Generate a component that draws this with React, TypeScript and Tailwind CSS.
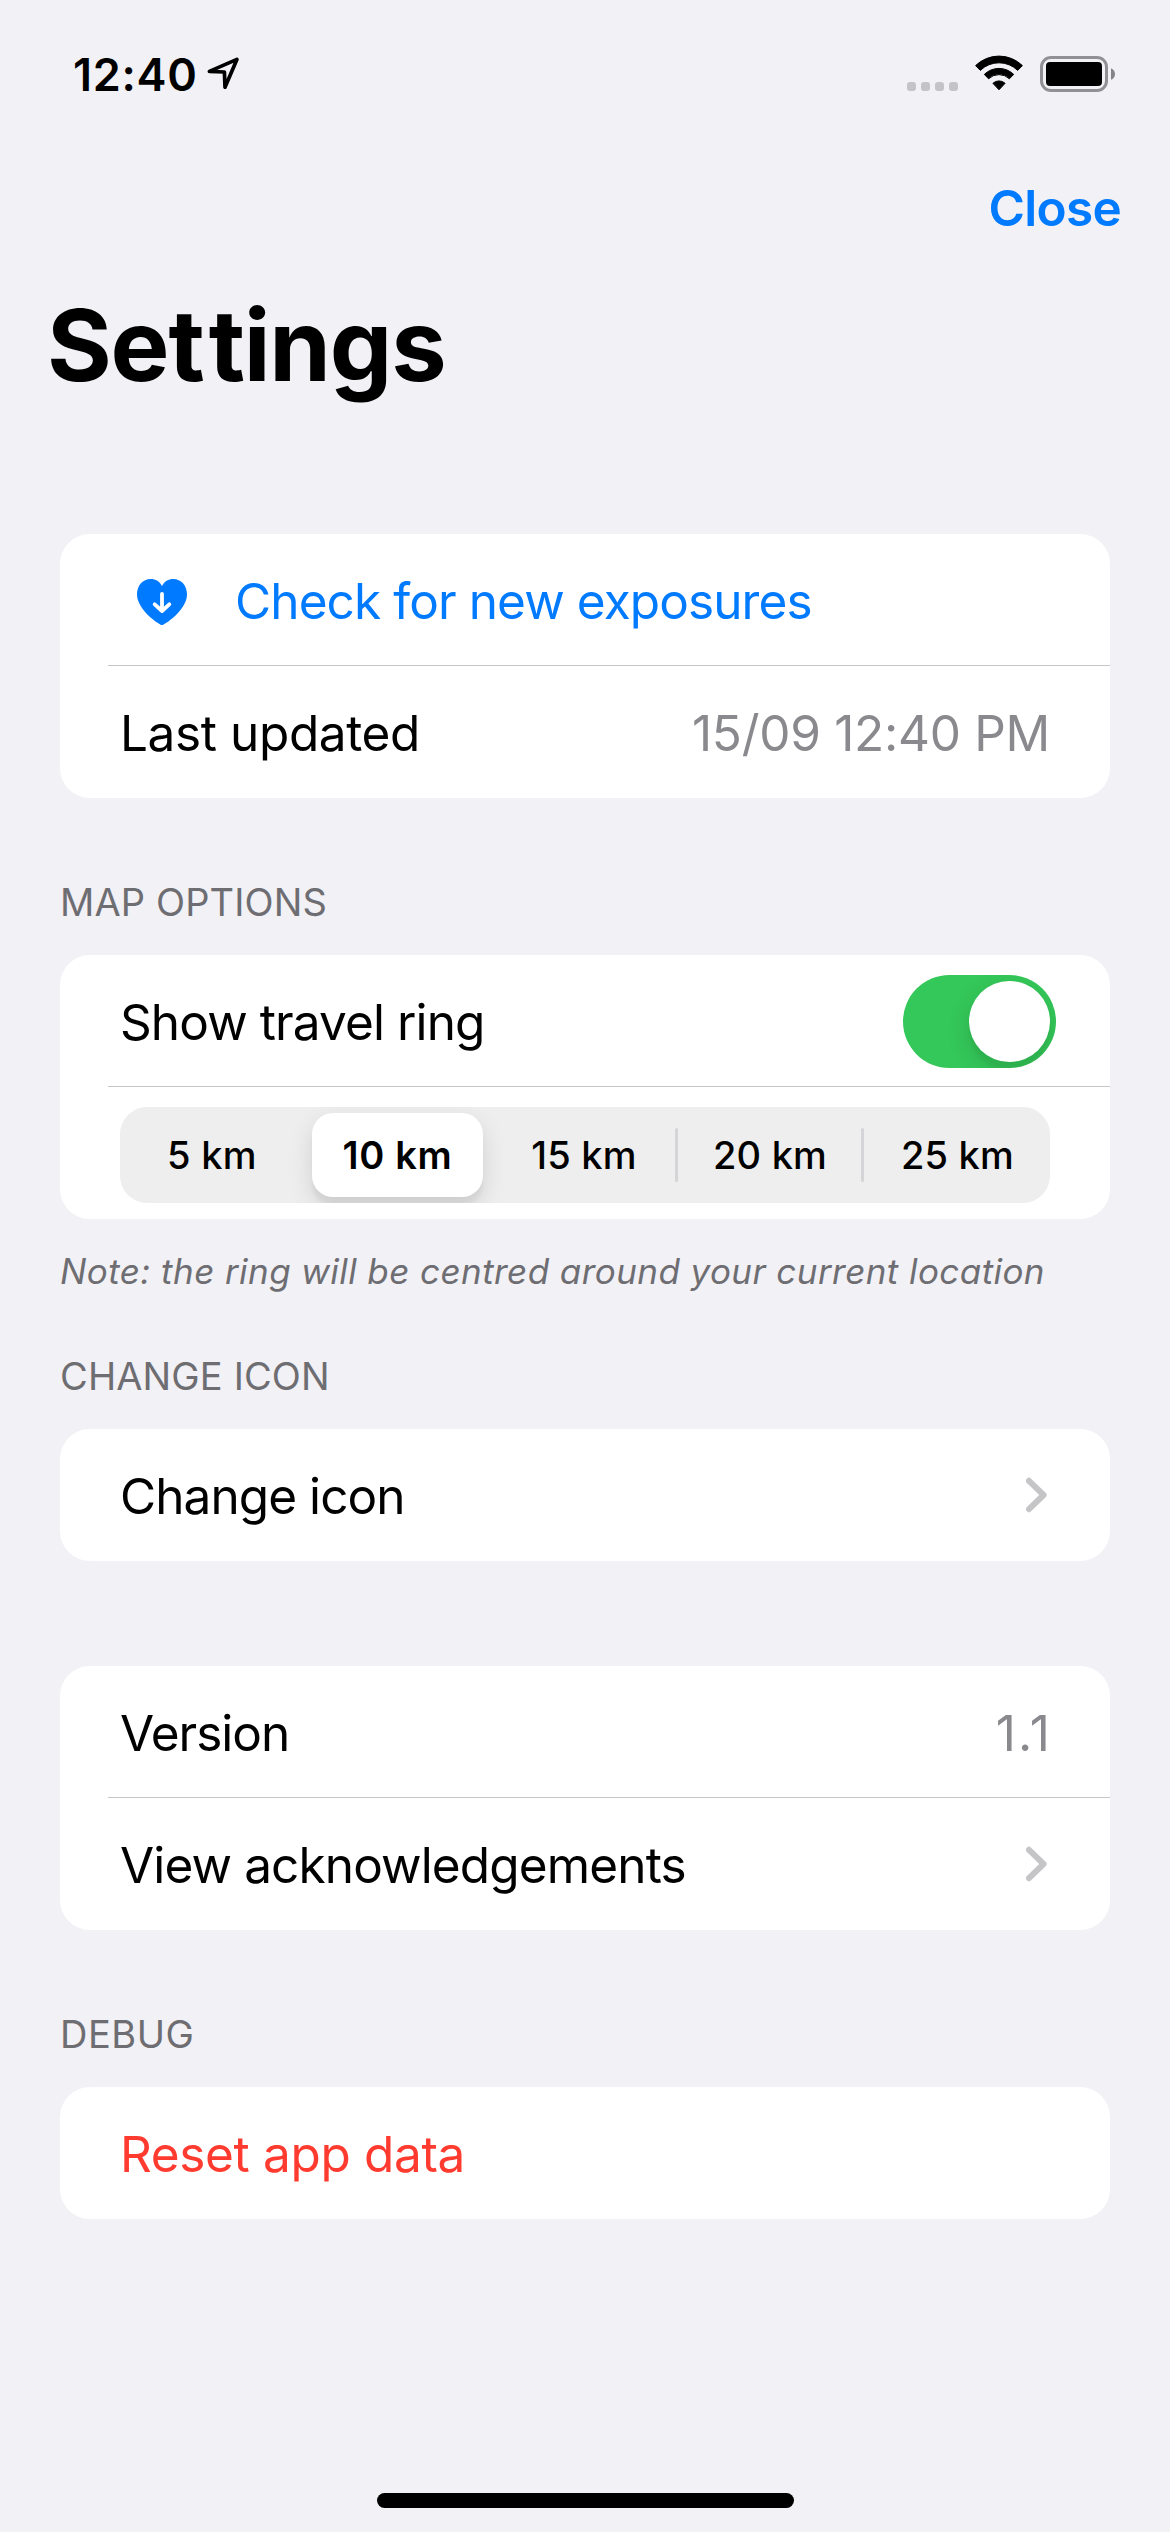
import type { ReactNode } from "react";

function LocationArrow() {
  return (
    <svg width="33" height="33" viewBox="0 0 33 33" fill="none" stroke="#000" strokeWidth="3.7" strokeLinejoin="round">
      <path d="M2.4 14.4 29.9 2.4 18 30.2 17.4 15Z" />
    </svg>
  );
}

function SignalDots() {
  return (
    <div className="mt-[34px] flex gap-[5px]">
      {[0, 1, 2, 3].map((i) => (
        <span key={i} className="size-[9px] rounded-[3px] bg-[#c4c3c8]" />
      ))}
    </div>
  );
}

function Wifi() {
  return (
    <svg className="ml-[17px] mt-[7px]" width="48" height="36" viewBox="0 0 48 36" stroke="#000" strokeWidth="1" strokeLinejoin="round">
      <path d="M.6 10.6A33.5 33.5 0 0 1 47.4 10.6L42.7 15.4A26.8 26.8 0 0 0 5.3 15.4Z" />
      <path d="M9.3 19.4A21 21 0 0 1 38.7 19.4L34.4 23.8A15 15 0 0 0 13.6 23.8Z" />
      <path d="M17.9 28.3A9 9 0 0 1 30.1 28.3L24 34.8Z" />
    </svg>
  );
}

function Battery() {
  return (
    <svg className="ml-[17px] mt-[8px]" width="75" height="36" viewBox="0 0 75 36">
      <rect x="1.5" y="1.5" width="65" height="33" rx="9.5" fill="none" stroke="#919095" strokeWidth="3" />
      <rect x="6" y="6" width="56" height="24" rx="4" fill="#000" />
      <path d="M71 12.2c2.4.9 4 3.1 4 5.8s-1.6 4.9-4 5.8Z" fill="#84838a" />
    </svg>
  );
}

function HeartDown() {
  return (
    <svg className="ml-[17px] mr-[48px] mt-[2px]" width="50" height="46" viewBox="0 0 50 46">
      <path
        fill="#007aff"
        d="M25 46C22.8 46 0 31 0 15.4C0 6.4 6 0 13.7 0 18.6 0 22.8 2.6 25 7 27.2 2.6 31.4 0 36.3 0 44 0 50 6.4 50 15.4C50 31 27.2 46 25 46Z"
      />
      <path d="M25 14.8V31.6M17.7 25.3 25 32 32.3 25.3" fill="none" stroke="#fff" strokeWidth="3.8" strokeLinecap="round" strokeLinejoin="round" />
    </svg>
  );
}

function Chevron() {
  return (
    <svg className="mr-[3px] mb-[2px]" width="21" height="36" viewBox="0 0 21 36" fill="none" stroke="#c5c5c7" strokeWidth="6" strokeLinecap="round" strokeLinejoin="round">
      <path d="M3 3.8 17.6 18 3 32.2" />
    </svg>
  );
}

function Card({ children, className = "" }: { children: ReactNode; className?: string }) {
  return <div className={`overflow-hidden rounded-[30px] bg-white ${className}`}>{children}</div>;
}

function Row({ children, className = "" }: { children: ReactNode; className?: string }) {
  return (
    <div className={`flex h-[132px] items-center justify-between px-[60px] pt-[2px] text-[49.5px] leading-[60px] ${className}`}>
      {children}
    </div>
  );
}

function Divider() {
  return <div className="-mt-px ml-12 h-px bg-[#c6c6c8]" />;
}

function SectionTitle({ children, className = "" }: { children: ReactNode; className?: string }) {
  return <h2 className={`mb-[30px] text-[38px] leading-[46px] text-[#6d6d72] ${className}`}>{children}</h2>;
}

const distances = [
  { label: "5 km", spacing: "mr-[2px] tracking-[0.3px]" },
  { label: "10 km", selected: true, spacing: "tracking-[0.7px]" },
  { label: "15 km", spacing: "mr-[2px] tracking-[0.2px]" },
  { label: "20 km", separated: true, spacing: "mr-[2px] tracking-[0.2px]" },
  { label: "25 km", separated: true, spacing: "ml-[1px] tracking-[0.2px]" },
];

function DistancePicker() {
  return (
    <div className="mx-[60px] mt-[20px] mb-[16px] grid h-[96px] grid-cols-5 overflow-hidden rounded-[27px] bg-[#eeeeee] text-[38px] font-medium leading-[46px]">
      {distances.map((d) => (
        <div key={d.label} className="relative flex items-center justify-center">
          {d.separated && <span className="absolute top-[21px] -left-[3px] h-[54px] w-[3px] rounded-full bg-[#d5d5d8]" />}
          {d.selected ? (
            <span className={`mr-[3px] flex h-[84px] w-[171px] items-center justify-center rounded-[21px] bg-white font-semibold shadow-[0_9px_24px_rgba(0,0,0,0.12),0_9px_3px_rgba(0,0,0,0.04)] ${d.spacing}`}>
              {d.label}
            </span>
          ) : (
            <span className={d.spacing}>{d.label}</span>
          )}
        </div>
      ))}
    </div>
  );
}

export default function App() {
  return (
    <div className="flex h-[2532px] w-[1170px] flex-col bg-[#f2f1f6] font-['Inter',sans-serif] text-black">
      <header className="flex h-[178px] items-start justify-between pt-[48px] pr-[55px] pl-[73px]">
        <div className="flex">
          <span className="text-[45px] font-[570] leading-[54px] tracking-[0.7px]">12:40</span>
          <span className="mt-[9px] ml-[9px]">
            <LocationArrow />
          </span>
        </div>
        <div className="flex items-start">
          <SignalDots />
          <Wifi />
          <Battery />
        </div>
      </header>

      <button className="mr-[49px] self-end text-[49.5px] font-[570] leading-[60px] tracking-[-0.69px] text-[#007aff]">Close</button>
      <h1 className="mt-[47px] ml-[47px] text-[99px] font-bold leading-[120px] tracking-[-1.2px]">
        Se<span className="tracking-[4px]">t</span>tings
      </h1>

      <main className="mt-[129px] px-[60px]">
        <Card>
          <Row className="justify-start! text-[#007aff]">
            <HeartDown />
            <span className="tracking-[-0.9px]">Check for new exposures</span>
          </Row>
          <Divider />
          <Row>
            <span className="tracking-[-0.39px]">Last updated</span>
            <span className="tracking-[-0.28px] text-[#8a8a8e]">15/09 12:40 PM</span>
          </Row>
        </Card>

        <SectionTitle className="mt-[81px] tracking-[0.13px]">MAP OPTIONS</SectionTitle>
        <Card>
          <Row>
            <span className="tracking-[-0.89px]">Show travel ring</span>
            <span className="-mr-[6px] mb-[1px] flex h-[93px] w-[153px] items-center justify-end overflow-hidden rounded-full bg-[#34c759] p-[6px]">
              <span className="size-[81px] rounded-full bg-white shadow-[0_9px_24px_rgba(0,0,0,0.12),0_9px_3px_rgba(0,0,0,0.04)]" />
            </span>
          </Row>
          <Divider />
          <DistancePicker />
        </Card>
        <p className="mt-[31px] text-[35px] italic leading-[42px] tracking-[0.42px] whitespace-nowrap text-[#6d6d72]">
          Note: the ring will be centred around your current location
        </p>

        <SectionTitle className="mt-[61px] tracking-[0.13px]">CHANGE ICON</SectionTitle>
        <Card>
          <Row>
            <span className="tracking-[-0.93px]">Change icon</span>
            <Chevron />
          </Row>
        </Card>

        <Card className="mt-[105px]">
          <Row>
            <span className="tracking-[-0.99px]">Version</span>
            <span className="-mr-[2px] tracking-[2px] text-[#8a8a8e]">1.1</span>
          </Row>
          <Divider />
          <Row>
            <span className="tracking-[-0.87px]">View acknowledgements</span>
            <Chevron />
          </Row>
        </Card>

        <SectionTitle className="mt-[81px] tracking-[0.5px]">DEBUG</SectionTitle>
        <Card>
          <Row>
            <span className="tracking-[-0.34px] text-[#ff3b30]">Reset app data</span>
          </Row>
        </Card>
      </main>

      <div className="mt-auto mb-[24px] h-[15px] w-[417px] self-center rounded-full bg-black" />
    </div>
  );
}
